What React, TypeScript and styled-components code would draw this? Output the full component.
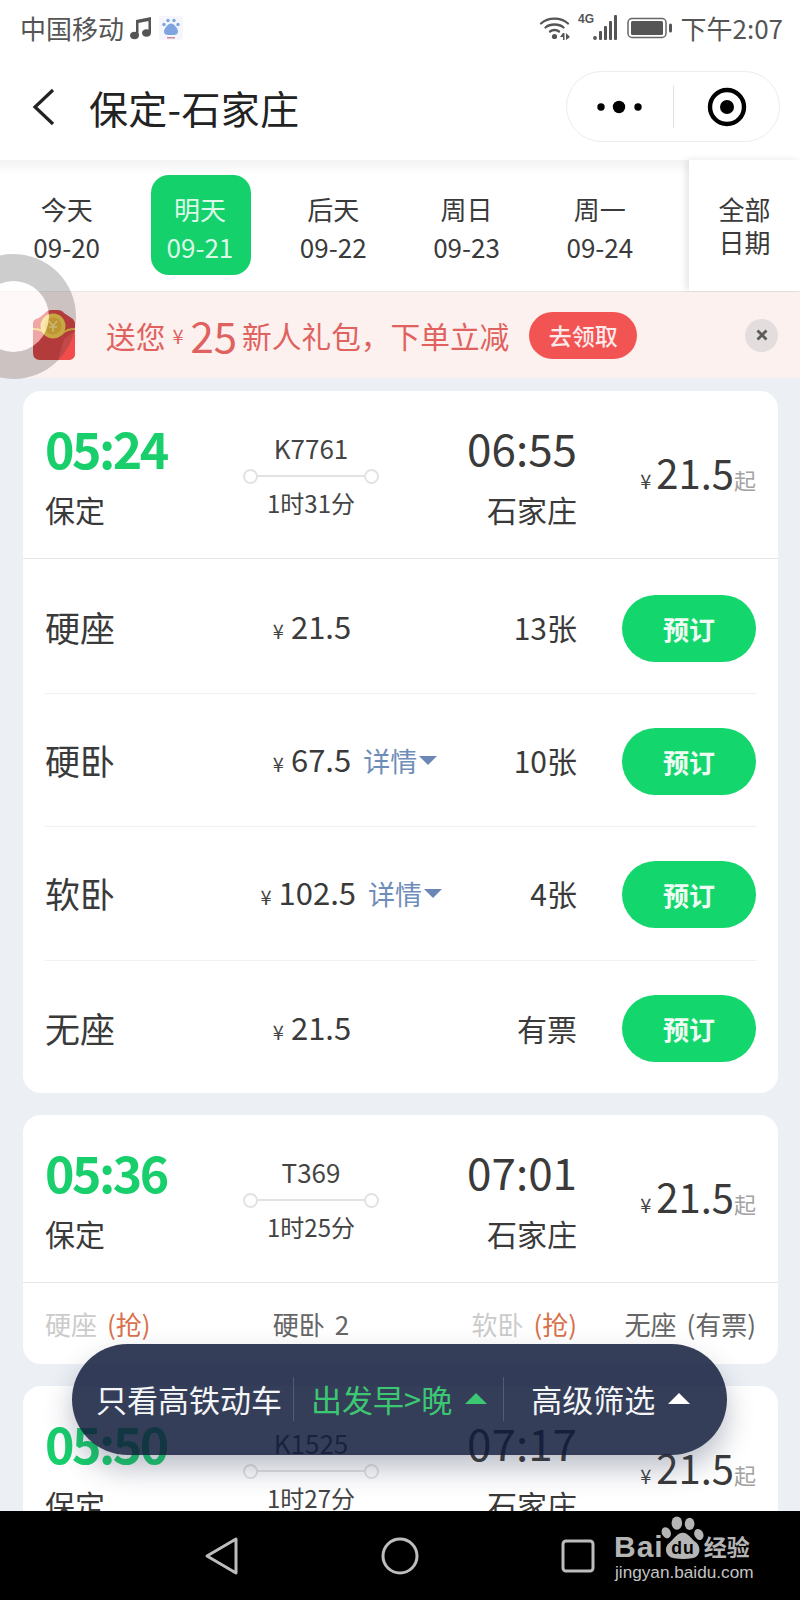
import React from "react";
import styled, { createGlobalStyle } from "styled-components";

const Global = createGlobalStyle`
  html, body { margin: 0; padding: 0; background: #ecf0f5; }
  * { box-sizing: border-box; }
  body { font-family: "Noto Sans CJK SC", "Noto Sans", sans-serif; color: #333; }
`;

const GREEN = "#18cf6c";
const COLS = "135px 262px 135px 179px";

const App_ = styled.div`
  position: relative;
  width: 800px;
  height: 1600px;
  overflow: hidden;
  display: flex;
  flex-direction: column;
  background: #ecf0f5;
`;

const StatusBar = styled.div`
  height: 55px;
  background: #fff;
  display: flex;
  align-items: center;
  justify-content: space-between;
  padding: 0 17px 0 20px;
  color: #555;
  font-size: 26px;
  line-height: 55px;
`;
const StatusGroup = styled.div<{ $gap?: number }>`
  display: flex;
  align-items: center;
  gap: ${(p) => p.$gap ?? 4}px;
`;

const NavBar = styled.div`
  height: 105px;
  background: #fff;
  display: flex;
  align-items: center;
  padding: 0 20px 2px 32px;
`;
const BackIcon = styled.svg`
  width: 24px;
  height: 40px;
  margin-right: 33px;
`;
const Title = styled.div`
  font-size: 39px;
  line-height: 50px;
  color: #222;
  flex: 1;
  letter-spacing: 0.3px;
`;
const Capsule = styled.div`
  width: 214px;
  height: 71px;
  border: 1.5px solid #ececec;
  border-radius: 36px;
  display: grid;
  grid-template-columns: 106px 1px 1fr;
  align-items: center;
  justify-items: center;
`;
const CapsuleLine = styled.div`
  width: 1px;
  height: 42px;
  background: #e2e2e2;
`;

const DateBar = styled.div`
  height: 132px;
  background: linear-gradient(#f3f3f3, #fff 15px);
  display: flex;
  border-bottom: 1px solid #e8e8e8;
`;
const DateList = styled.div`
  flex: 1;
  display: flex;
  padding: 15px 0 0 1px;
`;
const DateItem = styled.div`
  width: 133.3px;
  display: flex;
  justify-content: center;
`;
const DateChip = styled.div<{ $active?: boolean }>`
  width: 100px;
  height: 100px;
  border-radius: 18px;
  background: ${(p) => (p.$active ? "#14d16c" : "transparent")};
  color: ${(p) => (p.$active ? "#dcf9e8" : "#3a3a3a")};
  display: flex;
  flex-direction: column;
  align-items: center;
  padding: 15px 2px 0 0;
  font-size: 26px;
  line-height: 38px;
  white-space: nowrap;
`;
const DateAll = styled.div`
  width: 111px;
  background: #fff;
  box-shadow: -3px 0 7px rgba(0, 0, 0, 0.1);
  display: flex;
  flex-direction: column;
  align-items: center;
  padding-top: 32px;
  font-size: 26px;
  line-height: 33px;
  color: #3a3a3a;
`;

const Banner = styled.div`
  height: 86px;
  background: #fdf1ef;
  display: flex;
  align-items: center;
  padding: 0 22px 0 32px;
  color: #e0625f;
  font-size: 29.7px;
  white-space: nowrap;
`;
const Packet = styled.svg`
  width: 44px;
  height: 52px;
  margin-right: 30px;
  flex: none;
`;
const BannerYen = styled.span`
  font-size: 20px;
  margin: 0 7px 0 7px;
`;
const BannerNum = styled.span`
  font-size: 42px;
  line-height: 40px;
  margin-right: 5px;
`;
const BannerBtn = styled.div`
  margin-left: 20px;
  width: 108px;
  height: 47px;
  border-radius: 24px;
  background: #f25353;
  color: #fdeaea;
  font-size: 23px;
  font-weight: 500;
  display: flex;
  align-items: center;
  justify-content: center;
`;
const CloseBtn = styled.div`
  margin-left: auto;
  width: 33px;
  height: 33px;
  border-radius: 50%;
  background: #e3dedd;
  display: flex;
  align-items: center;
  justify-content: center;
`;
const Ring = styled.div`
  position: absolute;
  left: -49px;
  top: 254px;
  width: 125px;
  height: 125px;
  border-radius: 50%;
  border: 27px solid rgba(60, 60, 60, 0.26);
  background: rgba(255, 255, 255, 0.55);
  background-clip: padding-box;
`;

const List = styled.div`
  flex: 1;
  min-height: 0;
  overflow: hidden;
  padding: 13px 22px 0 23px;
  display: flex;
  flex-direction: column;
  gap: 22px;
`;
const Card = styled.div`
  flex: none;
  background: #fff;
  border-radius: 18px;
  padding-left: 22px;
`;
const Head = styled.div`
  height: 168px;
  margin-left: -22px;
  padding-left: 22px;
  display: grid;
  grid-template-columns: ${COLS};
  border-bottom: 1px solid #e6e6e6;
`;
const Side = styled.div<{ $right?: boolean }>`
  padding-top: 26px;
  display: flex;
  flex-direction: column;
  align-items: ${(p) => (p.$right ? "flex-end" : "flex-start")};
`;
const Depart = styled.div`
  font-size: 50px;
  line-height: 60px;
  font-weight: 700;
  color: ${GREEN};
  letter-spacing: -2.5px;
  white-space: nowrap;
`;
const Arrive = styled.div`
  font-size: 44px;
  line-height: 60px;
  color: #3a3a3a;
  white-space: nowrap;
`;
const Station = styled.div`
  font-size: 30px;
  line-height: 44px;
  margin-top: 10px;
  color: #3a3a3a;
`;
const Middle = styled.div`
  padding-top: 41px;
  display: flex;
  flex-direction: column;
  align-items: center;
`;
const TrainNo = styled.div`
  font-size: 26px;
  line-height: 36px;
  margin: -2px 0 2px;
  color: #444;
`;
const Route = styled.div`
  width: 136px;
  height: 16px;
  display: flex;
  align-items: center;
`;
const RouteDot = styled.div`
  width: 15px;
  height: 15px;
  border-radius: 50%;
  border: 2px solid #e2e2e2;
  flex: none;
`;
const RouteLine = styled.div`
  flex: 1;
  height: 2px;
  background: #e2e2e2;
`;
const Duration = styled.div`
  font-size: 24px;
  line-height: 38px;
  color: #444;
`;
const PriceBox = styled.div`
  padding-top: 51px;
  display: flex;
  justify-content: flex-end;
  align-items: baseline;
  line-height: 60px;
  height: 111px;
`;
const Yen = styled.span`
  font-size: 20px;
  color: #444;
  margin-right: 5px;
`;
const BigPrice = styled.span`
  font-size: 40px;
  color: #3a3a3a;
`;
const Qi = styled.span`
  font-size: 22px;
  color: #a3a3a3;
`;

const Seat = styled.div<{ $first?: boolean }>`
  height: ${(p) => (p.$first ? 135 : 133.3)}px;
  padding-top: ${(p) => (p.$first ? 2 : 0)}px;
  margin-right: 21px;
  display: grid;
  grid-template-columns: 135px 262px 135px 1fr;
  align-items: center;
  border-bottom: 1px solid #f1f1f1;
  &:last-child {
    border-bottom: 0;
    height: 132.5px;
    padding-top: 2px;
  }
`;
const SeatName = styled.div`
  font-size: 35px;
  line-height: 50px;
  color: #3a3a3a;
`;
const SeatPrice = styled.div`
  display: grid;
  grid-template-columns: 1fr auto 1fr;
  align-items: center;
  white-space: nowrap;
  padding-left: 2px;
`;
const SeatAmount = styled.div`
  display: flex;
  align-items: baseline;
  font-size: 31px;
  line-height: 44px;
  padding-top: 3px;
  color: #3a3a3a;
  grid-column: 2;
`;
const SeatYen = styled.span`
  font-size: 20px;
  margin-right: 7px;
  color: #444;
`;
const Detail = styled.div`
  grid-column: 3;
  display: flex;
  align-items: center;
  margin-left: 12px;
  font-size: 27px;
  color: #6f8db9;
`;
const DetailArrow = styled.div`
  width: 0;
  height: 0;
  margin-left: 2px;
  border-left: 9px solid transparent;
  border-right: 9px solid transparent;
  border-top: 9px solid #6a87b6;
`;
const SeatCount = styled.div`
  text-align: right;
  font-size: 30px;
  line-height: 44px;
  color: #3a3a3a;
`;
const BookBtn = styled.div`
  margin: 2px 0 0 45px;
  width: 134px;
  height: 67px;
  border-radius: 34px;
  background: #13d66c;
  color: #eefcf4;
  font-size: 26px;
  font-weight: 700;
  display: flex;
  align-items: center;
  justify-content: center;
`;

const Summary = styled.div`
  height: 81px;
  display: grid;
  grid-template-columns: ${COLS};
  align-items: center;
  font-size: 26px;
`;
const SummaryItem = styled.div<{ $off?: boolean; $align?: string }>`
  color: ${(p) => (p.$off ? "#cbcbcb" : "#666")};
  text-align: ${(p) => p.$align ?? "left"};
  white-space: nowrap;
`;
const Grab = styled.span`
  color: #d9714a;
  margin-left: 10px;
`;
const SummaryNote = styled.span`
  margin-left: 10px;
`;

const FilterBar = styled.div`
  position: absolute;
  left: 72px;
  top: 1344px;
  width: 655px;
  height: 111px;
  border-radius: 56px;
  background: rgba(18, 28, 60, 0.85);
  box-shadow: 0 14px 28px rgba(50, 60, 90, 0.32);
  display: flex;
  align-items: center;
  padding-left: 24px;
  padding-bottom: 2px;
  font-size: 31px;
  color: #fff;
  white-space: nowrap;
`;
const FilterLine = styled.div<{ $l: number; $r: number }>`
  width: 1px;
  height: 44px;
  margin: 0 ${(p) => p.$r}px 0 ${(p) => p.$l}px;
  background: rgba(255, 255, 255, 0.16);
`;
const FilterLabel = styled.span<{ $green?: boolean }>`
  color: ${(p) => (p.$green ? "#3cc873" : "#f4f5f7")};
`;
const FilterArrow = styled.div<{ $green?: boolean }>`
  width: 0;
  height: 0;
  margin-left: 13px;
  border-left: 11px solid transparent;
  border-right: 11px solid transparent;
  border-bottom: 11px solid ${(p) => (p.$green ? "#3cc873" : "#fff")};
`;

const SystemBar = styled.div`
  height: 89px;
  flex: none;
  background: #000;
  display: grid;
  grid-template-columns: repeat(3, 178px);
  justify-content: center;
  align-items: center;
  position: relative;
  z-index: 2;
`;
const SysCell = styled.div`
  display: flex;
  justify-content: center;
`;
const Watermark = styled.div`
  position: absolute;
  left: 614px;
  top: 3px;
  width: 150px;
  color: #b5b5b5;
`;
const MarkTop = styled.div`
  height: 48px;
  display: flex;
  align-items: flex-end;
  font-family: "Liberation Sans", sans-serif;
  font-weight: 700;
  font-size: 30px;
  letter-spacing: 1px;
  line-height: 30px;
`;
const MarkCn = styled.span`
  font-family: "Noto Sans CJK SC", sans-serif;
  font-size: 23px;
  line-height: 32px;
  font-weight: 700;
  letter-spacing: 0;
  margin-left: -1px;
`;
const MarkUrl = styled.div`
  font-family: "Liberation Sans", sans-serif;
  font-size: 17.2px;
  line-height: 22px;
  margin-top: -1px;
  color: #c4c4c4;
  white-space: nowrap;
  padding-left: 1px;
`;

const Music = () => (
  <svg width="26" height="26" viewBox="0 0 26 26">
    <path d="M8 5 L23 2 V5.5 L10.5 8 V20.5 H8Z M20.5 5 H23 V18 H20.5Z" fill="#555" />
    <ellipse cx="6.5" cy="20.5" rx="4.5" ry="3.8" fill="#555" />
    <ellipse cx="18.5" cy="18" rx="4.5" ry="3.8" fill="#555" />
  </svg>
);
const BaiduApp = () => (
  <svg width="26" height="26" viewBox="0 0 26 26">
    <rect x="1" y="1" width="24" height="24" rx="3" fill="#f4f6fb" />
    <g fill="#7fa5e0">
      <circle cx="10" cy="5.5" r="1.7" /><circle cx="16" cy="5.5" r="1.7" />
      <circle cx="6" cy="9.5" r="1.7" /><circle cx="20" cy="9.5" r="1.7" />
      <path d="M13 8.5c3 0 7 5 7 8s-2.5 3.5-7 3.5-7-.5-7-3.5 4-8 7-8z" />
    </g>
    <rect x="9" y="22" width="8" height="1.5" fill="#d08a9a" />
  </svg>
);
const WifiIcon = () => (
  <svg width="32" height="28" viewBox="0 0 32 28">
    <g fill="none" stroke="#555" strokeWidth="2.3" strokeLinecap="round">
      <path d="M2 9.5 C9 3 22 3 29 9.5" />
      <path d="M6.5 13.5 C11 9.5 20 9.5 24.5 13.5" />
      <path d="M11 17.5 C13.5 15.5 17.5 15.5 20 17.5" />
    </g>
    <circle cx="15.5" cy="22.5" r="2.6" fill="#555" />
    <path d="M24 19 L21 23 H24 V26 H25.5 V19Z M27 19 V26 L31 23 Z" fill="#555" />
  </svg>
);
const SignalIcon = () => (
  <svg width="42" height="30" viewBox="0 0 42 30">
    <text x="0" y="10" fontSize="12" fontWeight="700" fontFamily="Liberation Sans, sans-serif" fill="#555">4G</text>
    <g fill="#555">
      <circle cx="17" cy="25" r="1.9" />
      <rect x="21" y="18" width="3" height="9" rx="1" />
      <rect x="26" y="13" width="3" height="14" rx="1" />
      <rect x="31" y="8" width="3" height="19" rx="1" />
      <rect x="36" y="2" width="3" height="25" rx="1" />
    </g>
  </svg>
);
const BatteryIcon = () => (
  <svg width="46" height="24" viewBox="0 0 46 24">
    <rect x="1" y="2.5" width="38" height="19" rx="4" fill="none" stroke="#666" strokeWidth="1.5" />
    <rect x="4" y="5" width="32" height="14" rx="1.5" fill="#555" />
    <rect x="42" y="7.5" width="3" height="9" rx="1.5" fill="#555" />
  </svg>
);

const RedPacket = () => (
  <Packet viewBox="0 0 44 52">
    <path d="M4 10 Q8 9 13 4 Q15 1 20 1 H25 Q30 1 32 4 L41 10 Q43 12 43 16 V44 Q43 51 36 51 H8 Q1 51 1 44 V15 Q1 11 4 10Z" fill="#dc3b3b" />
    <path d="M32 30 L43 22 V44 Q43 51 36 51 H26Z" fill="#f24c4c" />
    <path d="M1 20 Q10 20 14 25 Q22 31 30 25 Q34 20 43 20" fill="none" stroke="#f4bd3c" strokeWidth="2" />
    <circle cx="21" cy="17" r="12.5" fill="#f7cd45" />
    <circle cx="21" cy="17" r="8.5" fill="#eab52f" />
    <path d="M17 12 L21 17 L25 12 M17 18 H25 M21 17 V23" stroke="#fae38a" strokeWidth="1.5" fill="none" />
  </Packet>
);

const Paw = () => (
  <svg width="44" height="48" viewBox="0 0 50 52" style={{ margin: "0 0 0 -3px" }}>
    <g fill="#b5b5b5">
      <ellipse cx="18" cy="9" rx="6" ry="7.5" />
      <ellipse cx="32.5" cy="10" rx="5.5" ry="7" />
      <ellipse cx="6" cy="20" rx="5" ry="6.5" transform="rotate(-25 6 20)" />
      <ellipse cx="43" cy="22" rx="5" ry="6.5" transform="rotate(-25 43 22)" />
      <path d="M25 20 C31 20 34 27 40 31 C46 36 45 48 35 49 C29 50 21 50 15 49 C5 48 3 37 9 32 C15 27 18 20 25 20Z" />
    </g>
    <text x="25" y="44" textAnchor="middle" fontSize="20" fontWeight="700" fontFamily="Liberation Sans, sans-serif" fill="#000">du</text>
  </svg>
);

type SeatRow = { name: string; price: string; count: string; detail?: boolean };
const seats: SeatRow[] = [
  { name: "硬座", price: "21.5", count: "13张" },
  { name: "硬卧", price: "67.5", count: "10张", detail: true },
  { name: "软卧", price: "102.5", count: "4张", detail: true },
  { name: "无座", price: "21.5", count: "有票" },
];

const TrainHead = (p: { dep: string; arr: string; no: string; dur: string }) => (
  <Head>
    <Side>
      <Depart>{p.dep}</Depart>
      <Station>保定</Station>
    </Side>
    <Middle>
      <TrainNo>{p.no}</TrainNo>
      <Route>
        <RouteDot />
        <RouteLine />
        <RouteDot />
      </Route>
      <Duration>{p.dur}</Duration>
    </Middle>
    <Side $right>
      <Arrive>{p.arr}</Arrive>
      <Station>石家庄</Station>
    </Side>
    <PriceBox>
      <Yen>¥</Yen>
      <BigPrice>21.5</BigPrice>
      <Qi>起</Qi>
    </PriceBox>
  </Head>
);

const dates = [
  ["今天", "09-20"],
  ["明天", "09-21"],
  ["后天", "09-22"],
  ["周日", "09-23"],
  ["周一", "09-24"],
];

export default function App() {
  return (
    <App_>
      <Global />
      <StatusBar>
        <StatusGroup $gap={4}>
          中国移动
          <Music />
          <BaiduApp />
        </StatusGroup>
        <StatusGroup $gap={7}>
          <WifiIcon />
          <SignalIcon />
          <BatteryIcon />
          <span>下午2:07</span>
        </StatusGroup>
      </StatusBar>
      <NavBar>
        <BackIcon viewBox="0 0 24 40">
          <path d="M21 3 L3 20 L21 37" fill="none" stroke="#222" strokeWidth="3.2" />
        </BackIcon>
        <Title>保定-石家庄</Title>
        <Capsule>
          <svg width="46" height="16" viewBox="0 0 46 16">
            <circle cx="4" cy="8" r="3.7" fill="#000" />
            <circle cx="22" cy="8" r="6.2" fill="#000" />
            <circle cx="41" cy="8" r="3.7" fill="#000" />
          </svg>
          <CapsuleLine />
          <svg width="40" height="40" viewBox="0 0 40 40">
            <circle cx="20" cy="20" r="17" fill="none" stroke="#000" strokeWidth="4.4" />
            <circle cx="20" cy="20" r="7" fill="#000" />
          </svg>
        </Capsule>
      </NavBar>
      <DateBar>
        <DateList>
          {dates.map(([a, b], i) => (
            <DateItem key={b}>
              <DateChip $active={i === 1}>
                <span>{a}</span>
                <span>{b}</span>
              </DateChip>
            </DateItem>
          ))}
        </DateList>
        <DateAll>
          <span>全部</span>
          <span>日期</span>
        </DateAll>
      </DateBar>
      <Banner>
        <RedPacket />
        送您
        <BannerYen>¥</BannerYen>
        <BannerNum>25</BannerNum>
        新人礼包，下单立减
        <BannerBtn>去领取</BannerBtn>
        <CloseBtn>
          <svg width="14" height="14" viewBox="0 0 14 14">
            <path d="M2.5 2.5 L11.5 11.5 M11.5 2.5 L2.5 11.5" stroke="#5c5c5c" strokeWidth="2.8" />
          </svg>
        </CloseBtn>
      </Banner>
      <List>
        <Card>
          <TrainHead dep="05:24" arr="06:55" no="K7761" dur="1时31分" />
          {seats.map((s, i) => (
            <Seat key={s.name} $first={i === 0}>
              <SeatName>{s.name}</SeatName>
              <SeatPrice>
                <SeatAmount>
                  <SeatYen>¥</SeatYen>
                  {s.price}
                </SeatAmount>
                {s.detail && (
                  <Detail>
                    详情
                    <DetailArrow />
                  </Detail>
                )}
              </SeatPrice>
              <SeatCount>{s.count}</SeatCount>
              <BookBtn>预订</BookBtn>
            </Seat>
          ))}
        </Card>
        <Card>
          <TrainHead dep="05:36" arr="07:01" no="T369" dur="1时25分" />
          <Summary>
            <SummaryItem $off>
              硬座<Grab>(抢)</Grab>
            </SummaryItem>
            <SummaryItem $align="center">
              硬卧<SummaryNote>2</SummaryNote>
            </SummaryItem>
            <SummaryItem $off $align="right">
              软卧<Grab>(抢)</Grab>
            </SummaryItem>
            <SummaryItem $align="right">
              无座<SummaryNote>(有票)</SummaryNote>
            </SummaryItem>
          </Summary>
        </Card>
        <Card>
          <TrainHead dep="05:50" arr="07:17" no="K1525" dur="1时27分" />
        </Card>
      </List>
      <Ring />
      <FilterBar>
        <FilterLabel>只看高铁动车</FilterLabel>
        <FilterLine $l={11} $r={17} />
        <FilterLabel $green>出发早&gt;晚</FilterLabel>
        <FilterArrow $green />
        <FilterLine $l={16} $r={27} />
        <FilterLabel>高级筛选</FilterLabel>
        <FilterArrow />
      </FilterBar>
      <SystemBar>
        <SysCell>
          <svg width="36" height="40" viewBox="0 0 36 40">
            <path d="M32 3 L3 20 L32 37 Z" fill="none" stroke="#bdbdbd" strokeWidth="3" strokeLinejoin="round" />
          </svg>
        </SysCell>
        <SysCell>
          <svg width="40" height="40" viewBox="0 0 40 40">
            <circle cx="20" cy="20" r="17" fill="none" stroke="#bdbdbd" strokeWidth="3" />
          </svg>
        </SysCell>
        <SysCell>
          <svg width="36" height="36" viewBox="0 0 36 36">
            <rect x="3" y="3" width="30" height="30" rx="3" fill="none" stroke="#bdbdbd" strokeWidth="3" />
          </svg>
        </SysCell>
        <Watermark>
          <MarkTop>
            Bai
            <Paw />
            <MarkCn>经验</MarkCn>
          </MarkTop>
          <MarkUrl>jingyan.baidu.com</MarkUrl>
        </Watermark>
      </SystemBar>
    </App_>
  );
}
